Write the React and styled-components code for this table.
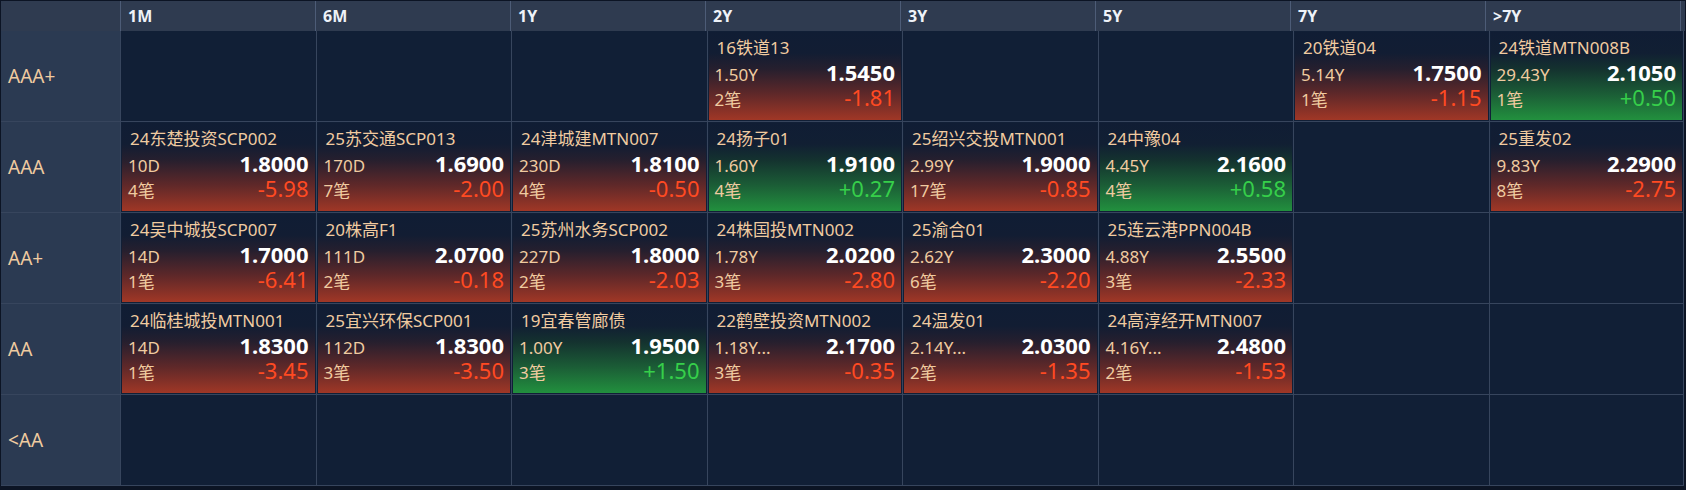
import styled, { createGlobalStyle } from 'styled-components'

const GlobalStyle = createGlobalStyle`
  html, body {
    margin: 0;
    padding: 0;
    background: #0c1424;
  }
  body {
    font-family: "Noto Sans", "Noto Sans CJK SC", sans-serif;
  }
`

const colors = {
  header: '#2f3b50',
  headerLine: '#4d5c77',
  label: '#2b3a52',
  cell: '#111f36',
  line: '#37455d',
  peach: '#f0cba0',
  red: '#ff4a22',
  green: '#36cf4a',
}

const Board = styled.div`
  width: 1684px;
  padding: 1px 0 0 1px;
`

const HeaderRow = styled.div`
  display: grid;
  grid-template-columns: 119px repeat(8, 195px) 1fr;
  height: 30px;
  background: ${colors.header};
`

const HeaderCell = styled.div`
  display: flex;
  align-items: center;
  padding-left: 7px;
  border-left: ${({ $first }) => ($first ? 'none' : `1px solid ${colors.headerLine}`)};
  color: #eef2f8;
  font-size: 16px;
  font-weight: 700;
`

const Row = styled.div`
  display: grid;
  grid-template-columns: 119px repeat(8, 195.5px);
  height: 91px;
`

const RowLabel = styled.div`
  display: flex;
  align-items: center;
  padding-left: 7px;
  background: ${colors.label};
  border-bottom: 1px solid ${colors.line};
  color: ${colors.peach};
  font-size: 19px;
`

const Cell = styled.div`
  background: ${colors.cell};
  border-left: 1px solid ${colors.line};
  border-bottom: 1px solid ${colors.line};
  border-right: ${({ $last }) => ($last ? `1px solid ${colors.line}` : 'none')};
  padding: 1px;
  min-width: 0;
`

const gradients = {
  down: 'linear-gradient(180deg, #101d34 0%, #121d33 24%, #261f2e 42%, #5e2829 70%, #a03726 100%)',
  up: 'linear-gradient(180deg, #101d34 0%, #111f33 24%, #14322f 42%, #1b5c36 70%, #22903e 100%)',
}

const Card = styled.div`
  height: 100%;
  box-sizing: border-box;
  padding: 3px 6px 0 6px;
  background: ${({ $up }) => ($up ? gradients.up : gradients.down)};
`

const Name = styled.div`
  height: 25px;
  line-height: 25px;
  padding-left: 2px;
  color: ${colors.peach};
  font-size: 17px;
  white-space: nowrap;
  overflow: hidden;
`

const Line = styled.div`
  display: flex;
  justify-content: space-between;
  align-items: baseline;
  height: 25px;
  line-height: 25px;
`

const Sub = styled.span`
  color: ${colors.peach};
  font-size: 17px;
`

const Yield = styled.span`
  color: #ffffff;
  font-size: 22px;
  font-weight: 700;
`

const Change = styled.span`
  color: ${({ $up }) => ($up ? colors.green : colors.red)};
  font-size: 22px;
`

const columns = ['1M', '6M', '1Y', '2Y', '3Y', '5Y', '7Y', '>7Y']

const b = (name, term, yld, count, change) => ({ name, term, yld, count, change })

const rows = [
  {
    label: 'AAA+',
    cells: [
      null, null, null,
      b('16铁道13', '1.50Y', '1.5450', '2笔', '-1.81'),
      null, null,
      b('20铁道04', '5.14Y', '1.7500', '1笔', '-1.15'),
      b('24铁道MTN008B', '29.43Y', '2.1050', '1笔', '+0.50'),
    ],
  },
  {
    label: 'AAA',
    cells: [
      b('24东楚投资SCP002', '10D', '1.8000', '4笔', '-5.98'),
      b('25苏交通SCP013', '170D', '1.6900', '7笔', '-2.00'),
      b('24津城建MTN007', '230D', '1.8100', '4笔', '-0.50'),
      b('24扬子01', '1.60Y', '1.9100', '4笔', '+0.27'),
      b('25绍兴交投MTN001', '2.99Y', '1.9000', '17笔', '-0.85'),
      b('24中豫04', '4.45Y', '2.1600', '4笔', '+0.58'),
      null,
      b('25重发02', '9.83Y', '2.2900', '8笔', '-2.75'),
    ],
  },
  {
    label: 'AA+',
    cells: [
      b('24吴中城投SCP007', '14D', '1.7000', '1笔', '-6.41'),
      b('20株高F1', '111D', '2.0700', '2笔', '-0.18'),
      b('25苏州水务SCP002', '227D', '1.8000', '2笔', '-2.03'),
      b('24株国投MTN002', '1.78Y', '2.0200', '3笔', '-2.80'),
      b('25渝合01', '2.62Y', '2.3000', '6笔', '-2.20'),
      b('25连云港PPN004B', '4.88Y', '2.5500', '3笔', '-2.33'),
      null, null,
    ],
  },
  {
    label: 'AA',
    cells: [
      b('24临桂城投MTN001', '14D', '1.8300', '1笔', '-3.45'),
      b('25宜兴环保SCP001', '112D', '1.8300', '3笔', '-3.50'),
      b('19宜春管廊债', '1.00Y', '1.9500', '3笔', '+1.50'),
      b('22鹤壁投资MTN002', '1.18Y...', '2.1700', '3笔', '-0.35'),
      b('24温发01', '2.14Y...', '2.0300', '2笔', '-1.35'),
      b('24高淳经开MTN007', '4.16Y...', '2.4800', '2笔', '-1.53'),
      null, null,
    ],
  },
  {
    label: '<AA',
    cells: [null, null, null, null, null, null, null, null],
  },
]

function BondCard({ bond }) {
  const up = bond.change.startsWith('+')
  return (
    <Card $up={up}>
      <Name>{bond.name}</Name>
      <Line>
        <Sub>{bond.term}</Sub>
        <Yield>{bond.yld}</Yield>
      </Line>
      <Line>
        <Sub>{bond.count}</Sub>
        <Change $up={up}>{bond.change}</Change>
      </Line>
    </Card>
  )
}

function App() {
  return (
    <>
      <GlobalStyle />
      <Board>
        <HeaderRow>
          <HeaderCell $first />
          {columns.map((col) => (
            <HeaderCell key={col}>{col}</HeaderCell>
          ))}
          <HeaderCell />
        </HeaderRow>
        {rows.map((row) => (
          <Row key={row.label}>
            <RowLabel>{row.label}</RowLabel>
            {row.cells.map((bond, index) => (
              <Cell key={index} $last={index === row.cells.length - 1}>
                {bond && <BondCard bond={bond} />}
              </Cell>
            ))}
          </Row>
        ))}
      </Board>
    </>
  )
}

export default App
